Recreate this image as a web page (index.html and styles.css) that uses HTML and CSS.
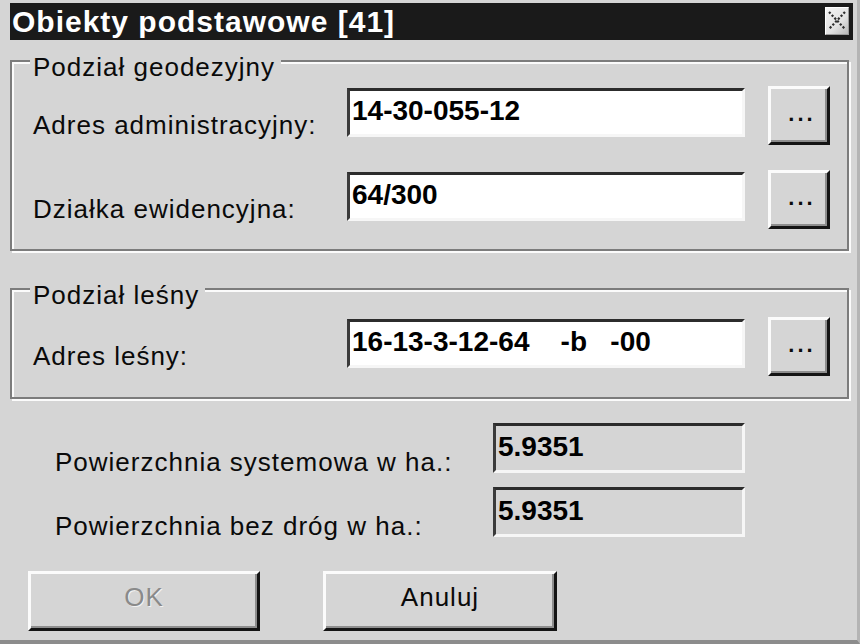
FILE: index.html
```html
<!DOCTYPE html>
<html lang="pl">
<head>
<meta charset="utf-8">
<title>Obiekty podstawowe</title>
<link rel="stylesheet" href="styles.css">
</head>
<body>
<div class="window">
  <div class="titlebar">
    <span class="title">Obiekty podstawowe [41]</span>
    <span class="close">
      <svg width="22" height="26" viewBox="0 0 22 26">
        <line x1="3" y1="4" x2="19" y2="21" stroke="#2e2e2e" stroke-width="2.2" stroke-dasharray="2.2 1.8"/>
        <line x1="19" y1="4" x2="3" y2="21" stroke="#2e2e2e" stroke-width="2.2" stroke-dasharray="2.2 1.8"/>
      </svg>
    </span>
  </div>

  <fieldset class="group">
    <legend>Podział geodezyjny</legend>
    <div class="row">
      <span class="lbl">Adres administracyjny:</span>
      <span class="field">14-30-055-12</span>
      <span class="browse"><span class="dots">...</span></span>
    </div>
    <div class="row">
      <span class="lbl">Działka ewidencyjna:</span>
      <span class="field">64/300</span>
      <span class="browse"><span class="dots">...</span></span>
    </div>
  </fieldset>

  <fieldset class="group group2">
    <legend>Podział leśny</legend>
    <div class="row">
      <span class="lbl">Adres leśny:</span>
      <span class="field">16-13-3-12-64    -b   -00</span>
      <span class="browse"><span class="dots">...</span></span>
    </div>
  </fieldset>

  <div class="area">
    <span class="lbl">Powierzchnia systemowa w ha.:</span>
    <span class="field readonly">5.9351</span>
    <span class="lbl">Powierzchnia bez dróg w ha.:</span>
    <span class="field readonly">5.9351</span>
  </div>

  <div class="actions">
    <span class="btn btn-ok disabled">OK</span>
    <span class="btn btn-cancel">Anuluj</span>
  </div>
</div>
</body>
</html>
```

FILE: styles.css
```css
html, body {
  margin: 0;
  padding: 0;
}
body {
  background: #d5d5d5;
  font-family: "Liberation Sans", Arial, sans-serif;
  color: #0a0a0a;
}
.window {
  width: 860px;
  height: 644px;
  box-sizing: border-box;
  padding: 3px 0 0 10px;
  background: #d5d5d5;
  border-right: 3px solid #b4b4b4;
  border-bottom: 4px solid #8c8c8c;
  overflow: hidden;
}
.titlebar {
  width: 843px;
  height: 37px;
  background: #1a1a1a;
  display: flex;
  justify-content: space-between;
  align-items: flex-start;
  box-sizing: border-box;
  padding: 0 4px 0 2px;
}
.title {
  color: #fff;
  font-weight: bold;
  font-size: 30px;
  letter-spacing: 1px;
  line-height: 34px;
  padding-top: 2px;
  white-space: nowrap;
}
.close {
  margin-top: 4px;
  width: 24px;
  height: 28px;
  box-sizing: border-box;
  background: linear-gradient(135deg, #f4f4f4 0%, #e2e2e2 60%, #b8b8b8 100%);
  border-top: 1px solid #fff;
  border-left: 1px solid #fff;
  border-right: 1px solid #9a9a9a;
  border-bottom: 1px solid #9a9a9a;
  display: flex;
  align-items: center;
  justify-content: center;
}
.close svg {
  display: block;
}
.group {
  width: 839px;
  box-sizing: border-box;
  margin: 0;
  min-inline-size: 0;
  padding: 4px 17px 20px 21px;
  border: 2px solid #7c7c7c;
  box-shadow: inset 2px 2px 0 #fbfbfb, 2px 2px 0 #fbfbfb;
}
.group legend {
  font-size: 26px;
  letter-spacing: 1px;
  line-height: 30px;
  padding: 12px 6px 0 3px;
  margin-left: -3px;
  background: #d5d5d5;
}
.group2 {
  margin-top: 17px;
  padding-top: 7px;
  padding-bottom: 21px;
}
.row {
  display: flex;
  align-items: flex-start;
}
.row + .row {
  margin-top: 25px;
}
.lbl {
  font-size: 26px;
  letter-spacing: 1px;
  line-height: 30px;
  margin-top: 24px;
  white-space: nowrap;
}
.row .lbl {
  width: 314px;
}
.field {
  display: flex;
  align-items: center;
  box-sizing: border-box;
  width: 398px;
  height: 49px;
  margin-top: 2px;
  padding: 0 0 3px 2px;
  background: #fff;
  border-top: 3px solid #2c2c2c;
  border-left: 3px solid #3a3a3a;
  border-right: 3px solid #f6f6f6;
  border-bottom: 3px solid #f6f6f6;
  font-weight: bold;
  font-size: 28px;
  white-space: pre;
  color: #000;
}
.browse {
  width: 62px;
  height: 59px;
  margin-left: 23px;
  box-sizing: border-box;
  background: #d5d5d5;
  border-top: 3px solid #fbfbfb;
  border-left: 3px solid #fbfbfb;
  border-right: 3px solid #141414;
  border-bottom: 3px solid #141414;
  box-shadow: inset -2px -2px 0 #8e8e8e;
  display: flex;
  justify-content: center;
  padding: 14px 0 0 6px;
}
.dots {
  font-size: 22px;
  line-height: 22px;
  letter-spacing: 3px;
  font-weight: bold;
}
.area {
  display: grid;
  grid-template-columns: 438px 252px;
  grid-auto-rows: 50px;
  row-gap: 14px;
  margin-top: 24px;
  padding-left: 45px;
}
.area .lbl {
  margin-top: 24px;
}
.area .field {
  width: 252px;
  height: 50px;
  margin-top: 0;
}
.field.readonly {
  background: #d5d5d5;
}
.actions {
  display: flex;
  gap: 63px;
  margin-top: 34px;
  padding-left: 18px;
}
.btn {
  box-sizing: border-box;
  height: 60px;
  display: flex;
  align-items: center;
  justify-content: center;
  padding-bottom: 7px;
  font-size: 26px;
  letter-spacing: 1px;
  background: #d5d5d5;
  border-top: 3px solid #fbfbfb;
  border-left: 3px solid #fbfbfb;
  border-right: 3px solid #141414;
  border-bottom: 3px solid #141414;
  box-shadow: inset -2px -2px 0 #8e8e8e;
}
.btn-ok {
  width: 232px;
}
.btn-cancel {
  width: 234px;
}
.disabled {
  color: #8a8a8a;
  text-shadow: 1px 1px 0 #f2f2f2;
}
```
